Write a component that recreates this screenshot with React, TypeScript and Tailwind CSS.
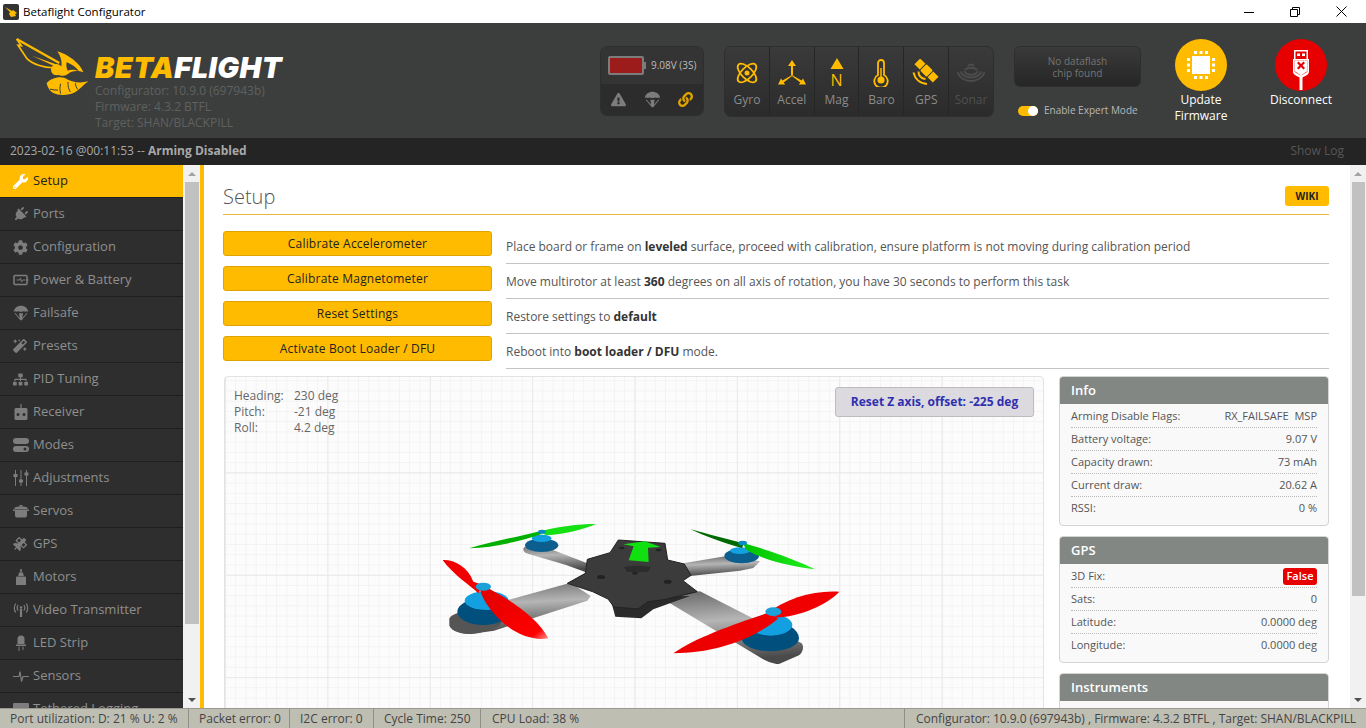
import { FaCog, FaExclamationTriangle, FaLink, FaMagic, FaPlug, FaSatellite, FaSitemap, FaWrench } from "react-icons/fa";
import type { ReactNode } from "react";

function Parachute({ size = 16 }: { size?: number }) {
  return (
    <svg width={size} height={size} viewBox="0 0 24 24" fill="currentColor">
      <path d="M1 10C2 4 7 1 12 1s10 3 11 9c-1.500-1-3-1-4.500 0-1.500-1-3.500-1-5 0v0h-3c-1.500-1-3.500-1-5 0C4 9 2.500 9 1 10z" />
      <path d="M2 12l9 11h2l9-11-2 .5-6 7 1-7h-6l1 7-6-7z" />
    </svg>
  );
}

function PowerIcon() {
  return (
    <svg width="16" height="16" viewBox="0 0 16 16" fill="none" stroke="currentColor">
      <rect x="1" y="3.500" width="13" height="9" rx="1" strokeWidth="1.500" />
      <path d="M14.500 6.500v3" strokeWidth="1.500" />
      <path d="M3.500 8h3l1-2 1 4 1-2h3" strokeWidth="1" />
    </svg>
  );
}

function ReceiverIcon() {
  return (
    <svg width="16" height="16" viewBox="0 0 16 16" fill="currentColor">
      <path d="M7.400 0h1.200v4H7.400z" />
      <path fillRule="evenodd" d="M3 4h10a1.500 1.500 0 0 1 1.500 1.500v9A1.500 1.500 0 0 1 13 16H3a1.500 1.500 0 0 1-1.500-1.500v-9A1.500 1.500 0 0 1 3 4zm2 5a1.500 1.500 0 1 0 0 3 1.500 1.500 0 0 0 0-3zm6 0a1.500 1.500 0 1 0 0 3 1.500 1.500 0 0 0 0-3z" />
    </svg>
  );
}

function ModesIcon() {
  return (
    <svg width="16" height="16" viewBox="0 0 16 16" fill="currentColor">
      <rect x="0" y="1" width="16" height="6" rx="3" />
      <path fillRule="evenodd" d="M3 9h10a3 3 0 0 1 0 6H3a3 3 0 0 1 0-6zm9 1.500a1.500 1.500 0 1 0 0 3 1.500 1.500 0 0 0 0-3z" />
    </svg>
  );
}

function AdjustIcon() {
  return (
    <svg width="16" height="16" viewBox="0 0 16 16" fill="currentColor">
      <path d="M2 0h1v16H2zM7.500 0h1v16h-1zM13 0h1v16h-1z" />
      <path d="M.5 4h4v3h-4zM6 9.500h4v3H6zM11.500 2.500h4v3h-4z" />
    </svg>
  );
}

function PotIcon() {
  return (
    <svg width="16" height="16" viewBox="0 0 16 16" fill="currentColor">
      <path d="M6.500 2h3v1.500h-3z" />
      <path d="M2 4.500c2-1.200 10-1.200 12 0L15 6H1z" />
      <path d="M0 6.500h16V8h-2v4.500a2 2 0 0 1-2 2H4a2 2 0 0 1-2-2V8H0z" />
    </svg>
  );
}

function MotorIcon() {
  return (
    <svg width="16" height="16" viewBox="0 0 16 16" fill="currentColor">
      <path d="M7.200 0h1.600v3.500H7.200z" />
      <path d="M6 3.500h4l.800 3.500H5.200z" />
      <path d="M4 7.500h8a1 1 0 0 1 1 1V16H3V8.500a1 1 0 0 1 1-1z" />
    </svg>
  );
}

function VtxIcon() {
  return (
    <svg width="16" height="16" viewBox="0 0 16 16" fill="none" stroke="currentColor" strokeWidth="1.200">
      <path d="M7.500 7v8M8.500 7v8" />
      <circle cx="8" cy="5.500" r="1.300" fill="currentColor" stroke="none" />
      <path d="M5.200 3c-1.200 1.500-1.200 4 0 5.500M10.800 3c1.200 1.500 1.200 4 0 5.500" />
      <path d="M2.800 1.500c-2 2.500-2 6.500 0 9M13.200 1.500c2 2.500 2 6.500 0 9" />
    </svg>
  );
}

function LedIcon() {
  return (
    <svg width="16" height="16" viewBox="0 0 16 16" fill="currentColor">
      <path d="M4.500 4a3.500 3.500 0 0 1 7 0v5h-7z" />
      <path d="M3 9.500h10V11H3z" />
      <path d="M5.500 11.500h1V16h-1zM9.500 11.500h1V15h-1z" />
    </svg>
  );
}

function PulseIcon() {
  return (
    <svg width="16" height="16" viewBox="0 0 16 16" fill="none" stroke="currentColor" strokeWidth="1.200">
      <path d="M0 8.500h6l1-5 1.500 10L10 8.500h6" />
    </svg>
  );
}

function LogIcon() {
  return (
    <svg width="16" height="16" viewBox="0 0 16 16" fill="currentColor">
      <rect x="0" y="2" width="16" height="12" rx="1" />
    </svg>
  );
}

const MENU: { label: string; icon: ReactNode }[] = [
  { label: "Setup", icon: <FaWrench size={15} /> },
  { label: "Ports", icon: <FaPlug size={15} className="rotate-45" /> },
  { label: "Configuration", icon: <FaCog size={15} /> },
  { label: "Power & Battery", icon: <PowerIcon /> },
  { label: "Failsafe", icon: <Parachute /> },
  { label: "Presets", icon: <FaMagic size={14} /> },
  { label: "PID Tuning", icon: <FaSitemap size={15} /> },
  { label: "Receiver", icon: <ReceiverIcon /> },
  { label: "Modes", icon: <ModesIcon /> },
  { label: "Adjustments", icon: <AdjustIcon /> },
  { label: "Servos", icon: <PotIcon /> },
  { label: "GPS", icon: <FaSatellite size={14} /> },
  { label: "Motors", icon: <MotorIcon /> },
  { label: "Video Transmitter", icon: <VtxIcon /> },
  { label: "LED Strip", icon: <LedIcon /> },
  { label: "Sensors", icon: <PulseIcon /> },
  { label: "Tethered Logging", icon: <LogIcon /> },
];

const ACTIONS = [
  {
    label: "Calibrate Accelerometer",
    note: (
      <>
        Place board or frame on <b>leveled</b> surface, proceed with calibration, ensure platform is not moving during calibration period
      </>
    ),
  },
  {
    label: "Calibrate Magnetometer",
    note: (
      <>
        Move multirotor at least <b>360</b> degrees on all axis of rotation, you have 30 seconds to perform this task
      </>
    ),
  },
  {
    label: "Reset Settings",
    note: (
      <>
        Restore settings to <b>default</b>
      </>
    ),
  },
  {
    label: "Activate Boot Loader / DFU",
    note: (
      <>
        Reboot into <b>boot loader / DFU</b> mode.
      </>
    ),
  },
];

function Bee() {
  return (
    <svg width="80" height="62" viewBox="45 112 240 186" className="shrink-0">
      <g fill="none" stroke="#ffbb00" strokeLinejoin="miter">
        <path d="M50 118L178 190" strokeWidth="7" />
        <path d="M50 118L64 138L54 137L80 176C96 192 130 206 168 204" strokeWidth="5" />
      </g>
      <path d="M96 168l72 26-4 6z" fill="#ffbb00" />
      <path d="M172 155C205 165 240 190 250 218C235 212 215 212 205 222C190 232 180 228 175 225C185 205 192 185 172 155z" fill="#ffbb00" />
      <path d="M200 188C215 194 230 204 236 214C222 209 210 209 203 213C199 205 198 196 200 188z" fill="#3c3e3d" />
      <circle cx="170" cy="210" r="17" fill="#ffbb00" />
      <path d="M140 250C150 238 175 228 195 235C215 248 240 252 265 245C250 255 240 270 225 278C205 288 175 288 160 280C150 275 142 262 140 250z" fill="#ffbb00" />
      <g fill="none" stroke="#3c3e3d" strokeWidth="3">
        <path d="M150 268c8 2 16 4 24 3M182 252c-3 10-3 20 0 30M204 247c-1 11 2 22 7 30M226 250c1 8 3 14 8 20" />
        <path d="M150 222c8 6 20 10 32 8" />
      </g>
    </svg>
  );
}

function Atom() {
  return (
    <svg width="24" height="24" viewBox="0 0 24 24" fill="none" stroke="#ffbb00" strokeWidth="1.800">
      <ellipse cx="12" cy="12" rx="12" ry="5.500" transform="rotate(45 12 12)" />
      <ellipse cx="12" cy="12" rx="12" ry="5.500" transform="rotate(-45 12 12)" />
      <circle cx="12" cy="12" r="2.500" fill="#ffbb00" stroke="none" />
    </svg>
  );
}

function Axes() {
  return (
    <svg width="28" height="26" viewBox="0 0 28 26" fill="#ffbb00">
      <path d="M14 0l4 6h-3v9l-1.200.8-.8-.8V6h-3z" />
      <path d="M13.200 15.500l1.500 0-9 7 1.500 2H0l3-6 1.500 2z" />
      <path d="M14.800 15.500l-1.500 0 9 7-1.500 2H28l-3-6-1.500 2z" />
    </svg>
  );
}

function Mag() {
  return (
    <div className="flex h-[30px] w-[28px] flex-col items-center">
      <svg width="14" height="11" viewBox="0 0 14 11" fill="#ffbb00">
        <path d="M7 0l6.500 11H.5z" />
      </svg>
      <span className="mt-[3px] text-[16px] leading-[16px] text-[#ffbb00]">N</span>
    </div>
  );
}

function Thermo() {
  return (
    <svg width="16" height="28" viewBox="0 0 16 28" fill="none" stroke="#ffbb00" strokeWidth="1.800">
      <path d="M5 16V4a3 3 0 0 1 6 0v12a6.700 6.700 0 1 1-6 0z" />
      <circle cx="8" cy="21" r="3.600" fill="#ffbb00" stroke="none" />
      <path d="M8 9v10" strokeWidth="1.500" />
    </svg>
  );
}

function Satellite() {
  return (
    <svg width="28" height="28" viewBox="0 0 28 28" fill="#ffbb00">
      <g transform="rotate(45 14.500 11.500)">
        <rect x="1.500" y="7.500" width="7.500" height="8" />
        <rect x="10" y="7" width="9" height="9" rx="1" />
        <rect x="20" y="7.500" width="7.500" height="8" />
      </g>
      <g fill="none" stroke="#ffbb00" strokeWidth="2">
        <path d="M6.500 12.500C6.500 17 9 19.500 13.500 20" />
        <path d="M1.500 13.500C3 20 8 24.500 15 25" />
      </g>
    </svg>
  );
}

function Sonar() {
  return (
    <svg width="28" height="22" viewBox="0 0 28 22" fill="none" stroke="#4c4c4c" strokeWidth="2">
      <path d="M11 4c1.500-2 4.500-2 6 0" />
      <path d="M8 8c2-3 10-3 12 0" />
      <path d="M7 9c3 5 11 5 14 0" />
      <path d="M3.500 9.500c4 8 17 8 21 0" />
      <path d="M.5 10c4 12 23 12 27 0" />
    </svg>
  );
}

function Chip() {
  return (
    <svg width="28" height="28" viewBox="0 0 28 28" fill="#fff">
      <rect x="5" y="5" width="18" height="18" />
      <path d="M7 0h3v3H7zM12.500 0h3v3h-3zM18 0h3v3h-3zM7 25h3v3H7zM12.500 25h3v3h-3zM18 25h3v3h-3zM0 7h3v3H0zM0 12.500h3v3H0zM0 18h3v3H0zM25 7h3v3h-3zM25 12.500h3v3h-3zM25 18h3v3h-3z" />
    </svg>
  );
}

function Usb() {
  return (
    <svg width="20" height="40" viewBox="0 0 20 40" fill="#fff">
      <path fillRule="evenodd" d="M3 0h14v9h1v12.500c0 3-3 4-6.500 6V40h-3V27.500c-3.500-2-6.500-3-6.500-6V9h1zm1.500 1.500V9h11V1.500zm1.500 2h3v2.500H6zm5 0h3v2.500h-3zM3.500 10.500v10.500c0 1.500 3 2.500 6.500 4.500 3.500-2 6.500-3 6.500-4.500V10.500z" />
      <path d="M3.500 10.500h13V21l-6.500 4.500L3.500 21z" />
      <path d="M6 13l1.500-1.500L10 14l2.500-2.500L14 13l-2.500 2.500L14 18l-1.500 1.500L10 17l-2.500 2.500L6 18l2.500-2.500z" fill="#e60000" />
    </svg>
  );
}

function SensorCell({ label, icon, off }: { label: string; icon: ReactNode; off?: boolean }) {
  return (
    <div className="flex flex-1 flex-col items-center border-r border-[#262626] last:border-r-0">
      <div className="flex h-[45px] items-center pt-[7px]">{icon}</div>
      <span className={`text-[12px] leading-[16px] ${off ? "text-[#4f4f4f]" : "text-[#8c8c8c]"}`}>{label}</span>
    </div>
  );
}

function HeaderBar() {
  return (
    <header className="flex h-[115px] shrink-0 bg-[#3c3e3d]">
      <div className="flex w-[600px] shrink-0 pl-[15px] pt-[14px]">
        <Bee />
        <div className="pt-[15px]">
          <div className="text-[29px] font-black italic leading-[31px] tracking-[0.4px] text-[#ffbb00] font-['Inter',sans-serif]">
            BETA<span className="text-white">FLIGHT</span>
          </div>
          <div className="text-[12px] leading-[16px] text-[#5f6160]">
            <div>Configurator: 10.9.0 (697943b)</div>
            <div>Firmware: 4.3.2 BTFL</div>
            <div>Target: SHAN/BLACKPILL</div>
          </div>
        </div>
      </div>

      <div className="mt-[23px] flex h-[70px] w-[104px] shrink-0 flex-col overflow-hidden rounded-[7px] border border-[#2e2e2e]">
        <div className="flex h-[37px] items-center bg-[#343434] pl-[7px]">
          <div className="h-[19px] w-[36px] rounded-[2px] border-2 border-[#7c7c7c] bg-[#9c1c1c]" />
          <div className="h-[7px] w-[2px] bg-[#7c7c7c]" />
          <span className="ml-[5px] whitespace-nowrap text-[10px] text-[#bcbcbc]">9.08V (3S)</span>
        </div>
        <div className="flex flex-1 items-center justify-between bg-[#2c2c2c] px-[10px] text-[#7c7c7c]">
          <FaExclamationTriangle size={15} />
          <Parachute size={17} />
          <FaLink size={15} className="text-[#e0a400]" />
        </div>
      </div>

      <div className="ml-[20px] mt-[23px] flex h-[71px] w-[270px] shrink-0 overflow-hidden rounded-[7px] border border-[#2e2e2e] bg-gradient-to-b from-[#3a3a3a] to-[#2b2b2b]">
        <SensorCell label="Gyro" icon={<Atom />} />
        <SensorCell label="Accel" icon={<Axes />} />
        <SensorCell label="Mag" icon={<Mag />} />
        <SensorCell label="Baro" icon={<Thermo />} />
        <SensorCell label="GPS" icon={<Satellite />} />
        <SensorCell label="Sonar" icon={<Sonar />} off />
      </div>

      <div className="ml-[20px] mt-[23px] w-[127px] shrink-0">
        <div className="flex h-[41px] items-center justify-center rounded-[6px] border border-[#2e2e2e] bg-gradient-to-b from-[#3a3a3a] to-[#262626] text-center text-[10px] leading-[12px] text-[#757575]">
          No dataflash
          <br />
          chip found
        </div>
        <div className="mt-[16px] flex items-center pl-[4px]">
          <div className="flex h-[10px] w-[20px] items-center justify-end rounded-full bg-[#ffbb00]">
            <div className="h-[10px] w-[10px] rounded-full bg-white" />
          </div>
          <span className="ml-[6px] whitespace-nowrap text-[10px] text-[#b8b8b8]">Enable Expert Mode</span>
        </div>
      </div>

      <div className="ml-[10px] flex w-[100px] shrink-0 flex-col items-center pt-[16px]">
        <div className="flex h-[52px] w-[52px] items-center justify-center rounded-full bg-[#ffbb00]">
          <Chip />
        </div>
        <div className="mt-[1px] text-center text-[12px] leading-[16px] text-white">
          Update
          <br />
          Firmware
        </div>
      </div>
      <div className="flex w-[100px] shrink-0 flex-col items-center pt-[16px]">
        <div className="flex h-[52px] w-[52px] items-start justify-center overflow-hidden rounded-full bg-[#e60000] pt-[11px]">
          <Usb />
        </div>
        <div className="mt-[1px] text-center text-[12px] leading-[16px] text-white">Disconnect</div>
      </div>
    </header>
  );
}

function ScrollTrack({ thumbTop, thumbHeight, track }: { thumbTop: string; thumbHeight: string; track: string }) {
  return (
    <div className={`flex shrink-0 flex-col items-center bg-[#f1f1f1] ${track}`}>
      <div className={`flex w-full items-center justify-center ${thumbTop}`}>
        <span className="h-0 w-0 border-x-[4px] border-b-[4px] border-x-transparent border-b-[#a3a3a3]" />
      </div>
      <div className={`mx-[1px] w-[calc(100%-3px)] bg-[#c1c1c1] ${thumbHeight}`} />
      <div className="mt-auto flex h-[17px] w-full items-center justify-center">
        <span className="h-0 w-0 border-x-[4px] border-t-[4px] border-x-transparent border-t-[#505050]" />
      </div>
    </div>
  );
}

function Sidebar() {
  return (
    <nav className="flex w-[183px] shrink-0 flex-col overflow-hidden bg-[#2e2e2e]">
      {MENU.map((item, i) => (
        <div
          key={item.label}
          className={`flex h-[33px] shrink-0 items-center border-b border-[#1f1f1f] pl-[13px] text-[13px] ${
            i === 0 ? "bg-[#ffbb00] text-[#222]" : "text-[#8f8f8f]"
          }`}
        >
          <span className={`flex w-[20px] shrink-0 items-center justify-start ${i === 0 ? "text-white" : "text-[#7d7d7d]"}`}>{item.icon}</span>
          <span className="whitespace-nowrap">{item.label}</span>
        </div>
      ))}
    </nav>
  );
}

function InfoCard({ title, rows }: { title: string; rows: { k: string; v: ReactNode }[] }) {
  return (
    <section className="mb-[10px] overflow-hidden rounded-[4px] border border-[#d4d4d4] bg-[#f9f9f9]">
      <h3 className="flex h-[27px] items-center bg-[#828784] pl-[11px] text-[13px] font-semibold text-white">{title}</h3>
      {rows.length > 0 && (
        <div className="px-[11px] pb-[5px] pt-[1px]">
          {rows.map((r, i) => (
            <div
              key={r.k}
              className={`flex h-[23px] items-center justify-between text-[11px] text-[#555] ${
                i < rows.length - 1 ? "border-b border-dotted border-[#bbb]" : ""
              }`}
            >
              <span>{r.k}</span>
              <span>{r.v}</span>
            </div>
          ))}
        </div>
      )}
    </section>
  );
}

function Drone() {
  return (
    <svg width="440" height="160" viewBox="0 0 1320 480" className="absolute left-[195px] top-[133px]">
      <defs>
        <linearGradient id="armA" x1="0" y1="0" x2="0.15" y2="1">
          <stop offset="0" stopColor="#666" />
          <stop offset="0.45" stopColor="#b5b5b5" />
          <stop offset="1" stopColor="#4a4a4a" />
        </linearGradient>
        <linearGradient id="red" x1="0" y1="0" x2="1" y2="1">
          <stop offset="0" stopColor="#e00000" />
          <stop offset="0.85" stopColor="#ff0000" />
          <stop offset="1" stopColor="#ff9090" />
        </linearGradient>
        <linearGradient id="green" x1="0" y1="0" x2="1" y2="0">
          <stop offset="0" stopColor="#00c000" />
          <stop offset="1" stopColor="#20f020" />
        </linearGradient>
      </defs>

      {/* back arms */}
      <path d="M312 112l40-10 150 58-6 26-60-22-110-32c-12-2-20-10-14-20z" fill="url(#armA)" />
      <path d="M790 160l130-22 100 16-20 20-40 8-150 16z" fill="url(#armA)" />

      {/* back left motor */}
      <ellipse cx="365" cy="106" rx="50" ry="20" fill="#0b5e8e" />
      <ellipse cx="365" cy="85" rx="30" ry="11" fill="#12a0e0" />
      <path d="M148 115c60-18 140-34 205-50l14 6C300 95 220 112 148 115z" fill="#00b000" />
      <path d="M360 64c50-14 115-22 168-22-30 14-90 30-150 34z" fill="#14e014" />
      <ellipse cx="366" cy="65" rx="12" ry="6" fill="#0a8ac4" />

      {/* back right motor */}
      <ellipse cx="965" cy="138" rx="52" ry="22" fill="#0b5e8e" />
      <ellipse cx="960" cy="122" rx="30" ry="10" fill="#12a0e0" />
      <path d="M812 58c50 14 110 30 160 42l-6 14C900 96 860 80 812 58z" fill="#006a00" />
      <path d="M970 100c70 18 160 50 215 78-70-8-160-28-208-60z" fill="url(#green)" />
      <ellipse cx="968" cy="99" rx="13" ry="7" fill="#0a8ac4" />

      {/* front arms */}
      <path d="M92 318l360-100 60 40-10 14-280 90-70 10c-20 2-50-8-60-20z" fill="url(#armA)" />
      <path d="M720 262l120-18 305 156c8 10 4 26-8 36l-60 26c-12 2-40-8-60-22z" fill="url(#armA)" />

      {/* plates */}
      <path d="M570 262l240-4-110 40-36 27-78-5z" fill="#2a2a2a" />
      <path d="M595 90l140 10 8 50 50 12 20 34-24 16 43 33-100 24-48 6-30 22-72-6-18-24-46-22-76-25 54-30 6-42 68-20z" fill="#3b3b3b" stroke="#222" strokeWidth="3" />
      <path d="M610 103l64-9 48 17-38 2 2 43-60-5 15-42z" fill="#10e010" />
      <path d="M612 172c20-6 60-6 80 0l-8 14h-62z" fill="#2c2c2c" />
      <ellipse cx="543" cy="201" rx="12" ry="6" fill="#222" />
      <ellipse cx="743" cy="215" rx="12" ry="6" fill="#222" />
      <ellipse cx="605" cy="114" rx="9" ry="4" fill="#222" />
      <ellipse cx="716" cy="120" rx="9" ry="4" fill="#222" />
      <ellipse cx="645" cy="190" rx="9" ry="4" fill="#222" />

      {/* left front motor */}
      <path d="M88 325c10-14 40-24 80-28l90 20-20 30-60 22c-30 6-80 2-90-22z" fill="#555" />
      <ellipse cx="190" cy="305" rx="78" ry="40" fill="#004f7c" />
      <ellipse cx="200" cy="272" rx="66" ry="28" fill="#12a0e0" />
      <path d="M68 150C100 148 145 170 160 215L190 225L175 250C150 225 100 195 68 150z" fill="#f00000" />
      <path d="M180 240L205 235C270 270 350 320 385 385C340 395 280 370 240 330C205 295 190 270 180 240z" fill="url(#red)" />
      <ellipse cx="190" cy="230" rx="23" ry="12" fill="#1ba0d8" />

      {/* right front motor */}
      <path d="M965 385a85 50 0 0 1 172 0 85 38 0 0 1-172 0z" fill="#004f7c" />
      <ellipse cx="1052" cy="345" rx="65" ry="32" fill="#12a0e0" />
      <path d="M1040 310C1100 265 1180 240 1258 245C1220 285 1140 320 1070 322z" fill="#f00000" />
      <path d="M1040 310L1075 325C1000 390 880 430 760 430C820 385 950 340 1040 310z" fill="#ee0000" />
      <ellipse cx="1060" cy="305" rx="24" ry="13" fill="#1ba0d8" />
    </svg>
  );
}

export default function App() {
  return (
    <div className="flex h-[728px] w-[1366px] flex-col overflow-hidden bg-white font-['Open_Sans',sans-serif] text-[#555]">
      <div className="flex h-[23px] shrink-0 items-center bg-white pl-[3px] pr-[2px] text-[11.5px] text-black">
        <div className="flex h-[16px] w-[16px] items-center justify-center rounded-[2px] bg-[#333]">
          <svg width="12" height="10" viewBox="0 0 12 10" fill="#ffbb00">
            <path d="M0 0l7 4 1-1 4 3-2 1 1 2-5 1-2-3 1-2z" />
          </svg>
        </div>
        <span className="ml-[4px]">Betaflight Configurator</span>
        <div className="ml-auto flex">
          <div className="flex w-[46px] items-center justify-center">
            <svg width="10" height="10" viewBox="0 0 10 10" stroke="#000" fill="none">
              <path d="M0 5.500h10" />
            </svg>
          </div>
          <div className="flex w-[46px] items-center justify-center">
            <svg width="10" height="10" viewBox="0 0 10 10" stroke="#000" fill="none">
              <path d="M.5 2.500h7v7h-7zM2.500 2.500v-2h7v7h-2" />
            </svg>
          </div>
          <div className="flex w-[46px] items-center justify-center">
            <svg width="11" height="11" viewBox="0 0 11 11" stroke="#000" fill="none">
              <path d="M.5.500l10 10M10.500.500l-10 10" />
            </svg>
          </div>
        </div>
      </div>

      <HeaderBar />

      <div className="flex h-[27px] shrink-0 items-center justify-between bg-[#242424] pb-[1px] pl-[10px] pr-[22px] text-[12px]">
        <span className="text-[#a8a8a8]">
          2023-02-16 @00:11:53 -- <b>Arming Disabled</b>
        </span>
        <span className="text-[#575757]">Show Log</span>
      </div>

      <div className="flex min-h-0 flex-1">
        <Sidebar />
        <ScrollTrack track="w-[17px]" thumbTop="h-[17px]" thumbHeight="h-[442px]" />
        <div className="w-[4px] shrink-0 bg-[#ffbb00]" />

        <main className="min-w-0 flex-1 overflow-hidden pl-[19px] pr-[21px] pt-[21px]">
          <div className="flex h-[29px] items-start justify-between border-b border-[#e8b83e]">
            <h1 className="text-[20px] font-light leading-[22px] text-[#555]">Setup</h1>
            <div className="flex h-[20px] w-[44px] items-center justify-center rounded-[3px] bg-[#ffbb00] text-[10px] font-bold text-[#222]">WIKI</div>
          </div>

          <div className="mt-[16px]">
            {ACTIONS.map(a => (
              <div key={a.label} className="flex h-[35px]">
                <div className="flex h-[25px] w-[269px] shrink-0 items-center justify-center rounded-[3px] border border-[#e0a400] bg-[#ffbb00] text-[12px] tracking-[0.2px] text-[#222]">
                  {a.label}
                </div>
                <div className="ml-[14px] flex h-[33px] flex-1 items-center border-b border-[#c4c4c4] text-[12px] text-[#555] [&_b]:text-[#333]">
                  <span>{a.note}</span>
                </div>
              </div>
            ))}
          </div>

          <div className="mt-[5px] flex items-start">
            <div className="relative ml-[1px] h-[400px] w-[820px] shrink-0 rounded-[4px] border border-[#e3e3e3] bg-[#fcfcfc] bg-[linear-gradient(#e9e9e9_1px,transparent_1px),linear-gradient(90deg,#e9e9e9_1px,transparent_1px),linear-gradient(#f3f3f3_1px,transparent_1px),linear-gradient(90deg,#f3f3f3_1px,transparent_1px)] bg-[size:102.4px_102.4px,102.4px_102.4px,10.24px_10.24px,10.24px_10.24px] bg-[position:0px_-7px,0px_-7px,0px_-7px,0px_-7px]">
              <div className="absolute left-[9px] top-[11px] grid grid-cols-[60px_auto] text-[12px] leading-[16px] text-[#666]">
                <span>Heading:</span>
                <span>230 deg</span>
                <span>Pitch:</span>
                <span>-21 deg</span>
                <span>Roll:</span>
                <span>4.2 deg</span>
              </div>
              <div className="absolute right-[9px] top-[10px] flex h-[30px] w-[199px] items-center justify-center rounded-[3px] border border-[#bdbdbd] bg-[#dcdadf] text-[12px] font-bold text-[#2f2fb0]">
                Reset Z axis, offset: -225 deg
              </div>
              <Drone />
            </div>

            <aside className="ml-[15px] w-[270px] shrink-0">
              <InfoCard
                title="Info"
                rows={[
                  {
                    k: "Arming Disable Flags:",
                    v: (
                      <>
                        RX_FAILSAFE <span className="ml-[3px]">MSP</span>
                      </>
                    ),
                  },
                  { k: "Battery voltage:", v: "9.07 V" },
                  { k: "Capacity drawn:", v: "73 mAh" },
                  { k: "Current draw:", v: "20.62 A" },
                  { k: "RSSI:", v: "0 %" },
                ]}
              />
              <InfoCard
                title="GPS"
                rows={[
                  {
                    k: "3D Fix:",
                    v: <span className="flex h-[17px] w-[34px] items-center justify-center rounded-[3px] bg-[#e60000] text-[11px] font-semibold text-white">False</span>,
                  },
                  { k: "Sats:", v: "0" },
                  { k: "Latitude:", v: "0.0000 deg" },
                  { k: "Longitude:", v: "0.0000 deg" },
                ]}
              />
              <InfoCard title="Instruments" rows={[{ k: " ", v: "" }]} />
            </aside>
          </div>
        </main>

        <ScrollTrack track="w-[16px]" thumbTop="h-[17px]" thumbHeight="h-[414px]" />
      </div>

      <footer className="flex h-[20px] shrink-0 items-center border-t border-[#9a9a90] bg-[#bfbeb3] text-[12px] text-[#444]">
        <span className="w-[189px] shrink-0 border-r border-[#8f8f86] pl-[10px] leading-[19px]">Port utilization: D: 21 % U: 2 %</span>
        <span className="w-[101px] shrink-0 border-r border-[#8f8f86] pl-[10px] leading-[19px]">Packet error: 0</span>
        <span className="w-[84px] shrink-0 border-r border-[#8f8f86] pl-[10px] leading-[19px]">I2C error: 0</span>
        <span className="w-[107px] shrink-0 border-r border-[#8f8f86] pl-[10px] leading-[19px]">Cycle Time: 250</span>
        <span className="pl-[11px] leading-[19px]">CPU Load: 38 %</span>
        <span className="ml-auto w-[462px] whitespace-nowrap border-l border-[#8f8f86] pl-[11px] leading-[19px] tracking-[-0.03px]">Configurator: 10.9.0 (697943b) , Firmware: 4.3.2 BTFL , Target: SHAN/BLACKPILL</span>
      </footer>
    </div>
  );
}
